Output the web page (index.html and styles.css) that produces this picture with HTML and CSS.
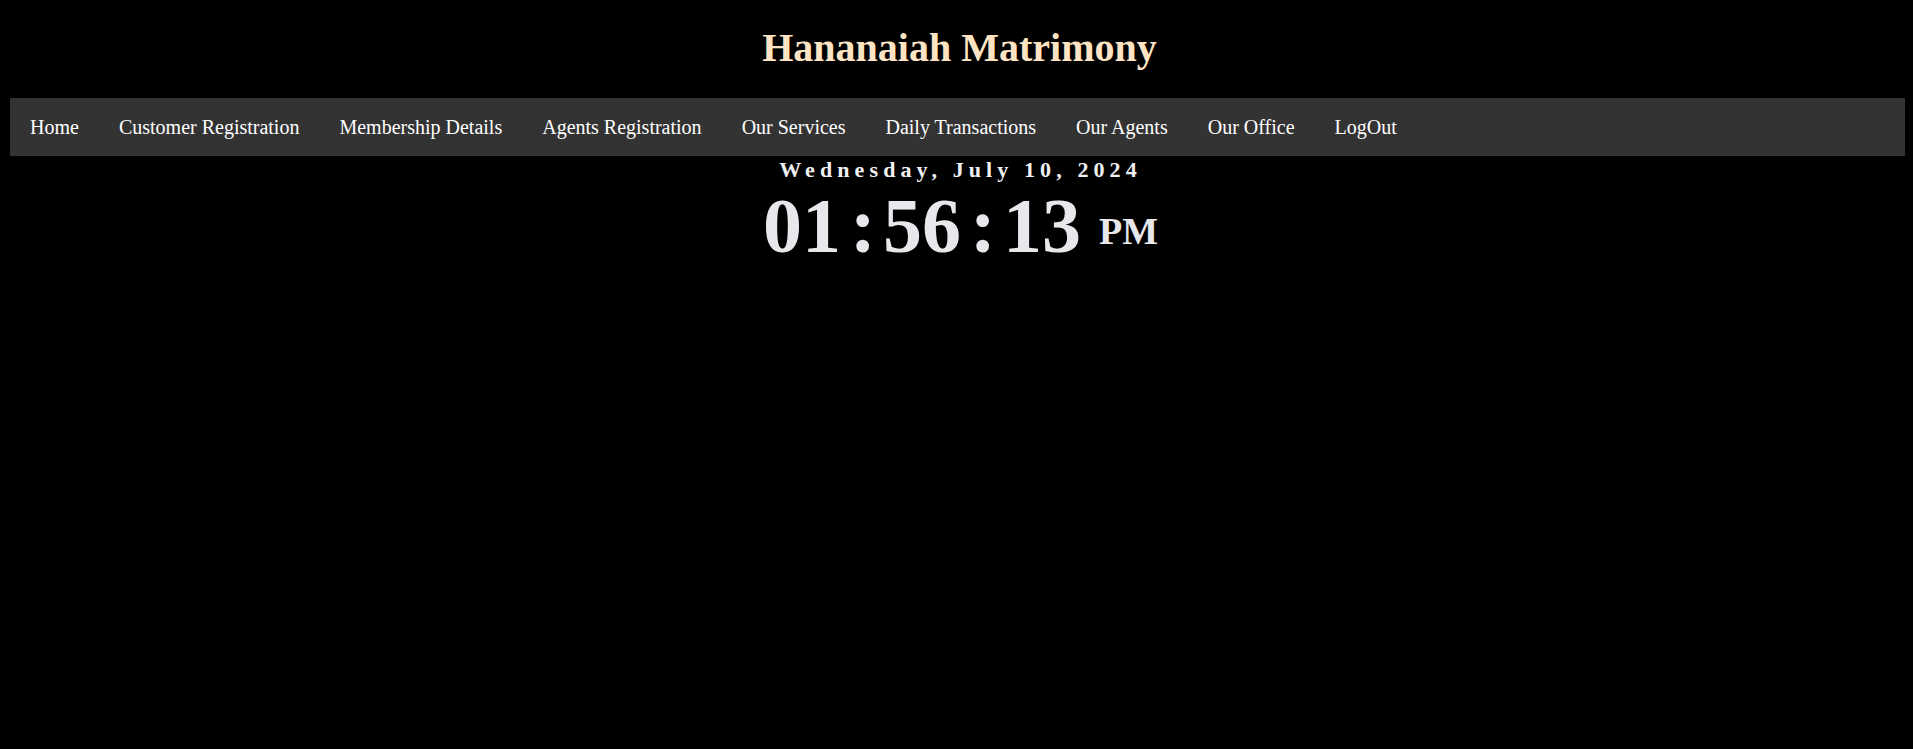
FILE: index.html
```html
<!DOCTYPE html>
<html lang="en">
<head>
<meta charset="utf-8">
<title>Hananaiah Matrimony</title>
<link rel="stylesheet" href="styles.css">
</head>
<body>
<h1 class="title">Hananaiah Matrimony</h1>
<nav class="nav">
  <a href="#">Home</a>
  <a href="#">Customer Registration</a>
  <a href="#">Membership Details</a>
  <a href="#">Agents Registration</a>
  <a href="#">Our Services</a>
  <a href="#">Daily Transactions</a>
  <a href="#">Our Agents</a>
  <a href="#">Our Office</a>
  <a href="#">LogOut</a>
</nav>
<div class="clock-wrap">
  <div class="date">Wednesday, July 10, 2024</div>
  <div class="clock">
    <span class="num">01</span><span class="colon">:</span><span class="num">56</span><span class="colon">:</span><span class="num">13</span><span class="ampm">PM</span>
  </div>
</div>
</body>
</html>
```
FILE: styles.css
```css
html, body {
  background: #000;
}
body {
  margin: 8px;
  font-family: "Liberation Serif", "Times New Roman", serif;
}
.title {
  margin: 18px -4px 28px 2px;
  text-align: center;
  font-size: 40px;
  font-weight: bold;
  color: #ffe4c4;
  line-height: 44px;
}
.nav {
  display: flex;
  background: #333;
  margin: 0 -4px 0 2px;
}
.nav a {
  display: block;
  color: #fff;
  text-decoration: none;
  font-size: 20px;
  line-height: 24px;
  padding: 17px 20px;
}
.clock-wrap {
  text-align: center;
  margin: 0 -4px 0 4px;
}
.date {
  margin-top: 2px;
  font-size: 22px;
  font-weight: bold;
  letter-spacing: 5.1px;
  color: #f0f0f2;
  line-height: 24px;
}
.clock {
  font-weight: bold;
  color: #e8e8ec;
  font-size: 78px;
  line-height: 88px;
}
.colon {
  margin: 0 7px 0 9px;
}
.ampm {
  font-size: 38px;
  margin-left: 18px;
  position: relative;
  top: -8px;
}
```
